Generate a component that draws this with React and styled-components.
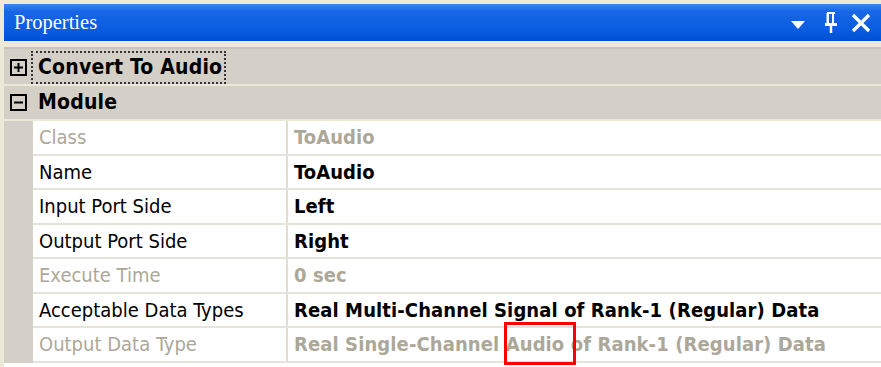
import React from "react";
import styled, { createGlobalStyle } from "styled-components";

const rows = [
  { label: "Class", value: "ToAudio", readOnly: true },
  { label: "Name", value: "ToAudio" },
  { label: "Input Port Side", value: "Left" },
  { label: "Output Port Side", value: "Right" },
  { label: "Execute Time", value: "0 sec", readOnly: true },
  { label: "Acceptable Data Types", value: "Real Multi-Channel Signal of Rank-1 (Regular) Data" },
  { label: "Output Data Type", value: "Real Single-Channel Audio of Rank-1 (Regular) Data", readOnly: true },
];

export default function App() {
  return (
    <>
      <GlobalStyle />
      <Panel>
        <TitleBar>
          <Title>Properties</Title>
          <TitleButtons>
            <svg width="16" height="10" viewBox="0 0 16 10">
              <path d="M1 1 H15 L8 9 Z" fill="#fff" />
            </svg>
            <PinIcon width="14" height="22" viewBox="0 0 14 22">
              <path d="M3 1 H11 M4 1 V12 M9 1 V12 M3.5 1 V12" stroke="#fff" strokeWidth="2" fill="none" />
              <path d="M1 12.5 H13" stroke="#fff" strokeWidth="3" />
              <path d="M7 13 V21" stroke="#fff" strokeWidth="2.5" />
            </PinIcon>
            <svg width="20" height="20" viewBox="0 0 20 20">
              <path d="M2 2 L18 18 M18 2 L2 18" stroke="#fff" strokeWidth="3.2" />
            </svg>
          </TitleButtons>
        </TitleBar>
        <Grid>
          <CategoryRow>
            <ExpandBox $open={false} />
            <CategoryName $focused>Convert To Audio</CategoryName>
          </CategoryRow>
          <CategoryRow>
            <ExpandBox $open />
            <CategoryName>Module</CategoryName>
          </CategoryRow>
          {rows.map((r) => (
            <PropRow key={r.label}>
              <Gutter />
              <LabelCell $dim={r.readOnly}>{r.label}</LabelCell>
              <ValueCell $dim={r.readOnly}>{r.value}</ValueCell>
            </PropRow>
          ))}
        </Grid>
        <Highlight />
      </Panel>
    </>
  );
}

function ExpandBox({ $open }) {
  return (
    <BoxIcon width="17" height="17" viewBox="0 0 17 17">
      <rect x="1" y="1" width="15" height="15" fill="none" stroke="#000" strokeWidth="2" />
      <path d="M4 8.5 H13" stroke="#000" strokeWidth="2" />
      {!$open && <path d="M8.5 4 V13" stroke="#000" strokeWidth="2" />}
    </BoxIcon>
  );
}

const GlobalStyle = createGlobalStyle`
  html, body {
    margin: 0;
    padding: 0;
    background: #fff;
  }
`;

const Panel = styled.div`
  position: relative;
  width: 881px;
  height: 367px;
  box-sizing: border-box;
  padding-left: 4px;
  padding-top: 4px;
  background: linear-gradient(#ece9d8, #ece9d8) left / 4px 100% no-repeat, #fff;
  display: flex;
  flex-direction: column;
  overflow: hidden;
  font-family: "DejaVu Sans Condensed", "DejaVu Sans", sans-serif;
  &::before {
    content: "";
    position: absolute;
    left: 0;
    top: 0;
    right: 0;
    height: 4px;
    background: #ece9d8;
  }
`;

const TitleBar = styled.div`
  height: 37px;
  flex: none;
  display: flex;
  align-items: center;
  justify-content: space-between;
  padding: 0 10px 0 10px;
  background: linear-gradient(#3a86f2 0%, #1766e6 20%, #0a5cdf 70%, #0050d2 100%);
  border-bottom: 6px solid #ece9d8;
  box-shadow: 0 8px 0 #c8c4b8;
  margin-bottom: 2px;
`;

const Title = styled.span`
  font-family: "Liberation Serif", "DejaVu Serif", serif;
  font-size: 20.5px;
  color: #fff;
`;

const TitleButtons = styled.div`
  display: flex;
  align-items: center;
  gap: 18px;
  svg:first-child {
    margin-top: 4px;
  }
`;

const PinIcon = styled.svg`
  margin-right: -5px;
`;

const Grid = styled.div`
  display: flex;
  flex-direction: column;
  background: #d4d0c8;
  padding-top: 2px;
`;

const CategoryRow = styled.div`
  height: 33px;
  display: flex;
  align-items: center;
  background: #d4d0c8;
  border-bottom: 2px solid #ece9d8;
`;

const BoxIcon = styled.svg`
  margin: 0 8px 0 6px;
  flex: none;
`;

const CategoryName = styled.span`
  font-weight: bold;
  font-size: 21px;
  letter-spacing: 0.2px;
  color: #000;
  padding: 3px 3px 4px 6px;
  margin-left: -3px;
  outline: ${(p) => (p.$focused ? "2px dotted #333" : "none")};
  outline-offset: -1px;
`;

const PropRow = styled.div`
  height: 32.5px;
  display: grid;
  grid-template-columns: 29px 255px 1fr;
  border-bottom: 2px solid #e6e3da;
  background: #fff;
  font-size: 20px;
`;

const Gutter = styled.div`
  background: #d4d0c8;
  margin-bottom: -2px;
`;

const LabelCell = styled.div`
  display: flex;
  align-items: center;
  padding-left: 6px;
  color: ${(p) => (p.$dim ? "#aca899" : "#000")};
  border-right: 2px solid #e0ddd3;
`;

const ValueCell = styled.div`
  display: flex;
  align-items: center;
  padding-left: 6px;
  font-weight: bold;
  white-space: nowrap;
  letter-spacing: 0.1px;
  color: ${(p) => (p.$dim ? "#aca899" : "#000")};
`;

const Highlight = styled.div`
  position: absolute;
  left: 504px;
  top: 322px;
  width: 72px;
  height: 43px;
  box-sizing: border-box;
  border: 3px solid #f00;
`;
